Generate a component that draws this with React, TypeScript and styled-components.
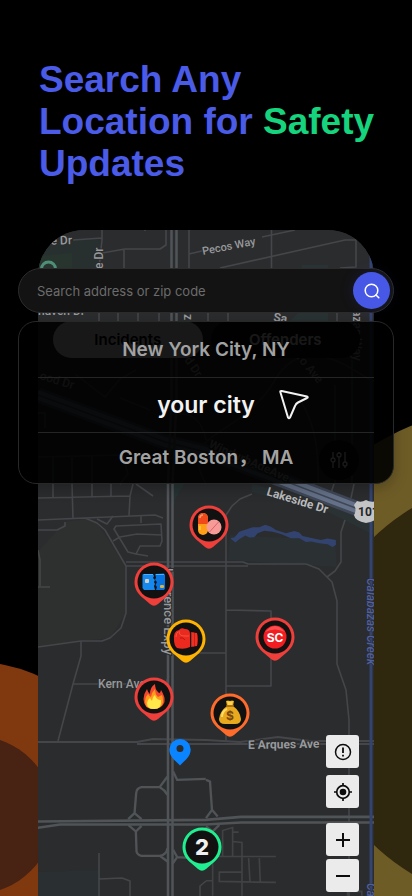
import React from 'react';
import styled, { createGlobalStyle } from 'styled-components';

const ui = 'Inter, "Noto Sans CJK SC", "Liberation Sans", sans-serif';

const GlobalStyle = createGlobalStyle`
  *, *::before, *::after { box-sizing: border-box; }
  html, body { margin: 0; background: #000; }
  button, input { font-family: ${ui}; }
`;

const Page = styled.main`
  position: relative;
  min-height: 100vh;
  overflow: hidden;
  background: #000;
  font-family: ${ui};
`;

const Disc = styled.div<{ $size: number; $x: number; $y: number; $side: 'left' | 'right'; $color: string }>`
  position: absolute;
  width: ${(p) => p.$size}px;
  height: ${(p) => p.$size}px;
  top: ${(p) => p.$y}px;
  ${(p) => p.$side}: ${(p) => p.$x}px;
  border-radius: 50%;
  background: ${(p) => p.$color};
`;

const Heading = styled.h1`
  position: relative;
  margin: 0;
  padding: 59px 0 45px 39px;
  color: #4a5be8;
  font: 700 37px/42px "Liberation Sans", Arial, sans-serif;
  white-space: nowrap;
`;

const Accent = styled.span`
  color: #16d47e;
`;

const Stage = styled.section`
  position: relative;
  display: grid;
`;

const Phone = styled.div`
  grid-area: 1 / 1;
  display: grid;
  margin: 0 38px;
  border-radius: 46px 46px 0 0;
  overflow: hidden;
  background: #2b2c2e;
`;

const MapCanvas = styled.div`
  grid-area: 1 / 1;
  position: relative;
  align-self: start;
  aspect-ratio: 336 / 666;
  & > svg { display: block; width: 100%; height: 100%; }
`;

const PinButton = styled.button<{ $x: number; $y: number }>`
  position: absolute;
  left: ${(p) => ((p.$x - 38) / 336) * 100}%;
  top: ${(p) => ((p.$y - 230) / 666) * 100}%;
  padding: 0;
  border: 0;
  background: none;
  cursor: pointer;
  transform: translate(-50%, -20px);
  svg { display: block; }
`;

const MapControls = styled.div`
  grid-area: 1 / 1;
  position: relative;
  display: flex;
  flex-direction: column;
  align-items: flex-end;
  padding: 91px 14px 4px 15px;
  pointer-events: none;
  & > * { pointer-events: auto; }
`;

const Tabs = styled.div`
  align-self: stretch;
  display: grid;
  grid-template-columns: 1fr 1fr;
  gap: 8px;
`;

const Tab = styled.button<{ $active?: boolean }>`
  height: 37px;
  border: 0;
  border-radius: 19px;
  background: ${(p) => (p.$active ? '#f0f0f0' : '#0c0c0d')};
  color: ${(p) => (p.$active ? '#000' : '#f4f4f4')};
  font-size: 15px;
  font-weight: 600;
`;

const FilterButton = styled.button`
  display: grid;
  place-items: center;
  width: 40px;
  height: 40px;
  margin: 82px 1px auto 0;
  border: 0;
  border-radius: 50%;
  background: #0c0c0d;
  color: #fff;
`;

const ToolStack = styled.div`
  display: flex;
  flex-direction: column;
  gap: 7px;
  margin-right: 1px;
`;

const Tool = styled.button<{ $spaced?: boolean }>`
  display: grid;
  place-items: center;
  width: 33px;
  height: 33px;
  margin-top: ${(p) => (p.$spaced ? 8 : 0)}px;
  padding: 0;
  border: 0;
  border-radius: 3px;
  background: #ebebeb;
  color: #0c0c0c;
`;

const ZoomPair = styled.div`
  display: grid;
  gap: 3px;
`;

const Overlay = styled.div`
  grid-area: 1 / 1;
  position: relative;
  align-self: start;
  display: grid;
  gap: 8px;
  margin: 38px 18px 0;
`;

const SearchBar = styled.form`
  display: flex;
  align-items: center;
  height: 45px;
  padding: 0 3px 0 18px;
  border: 1px solid #2c2c2d;
  border-radius: 23px;
  background: #131313;
`;

const SearchInput = styled.input`
  flex: 1;
  min-width: 0;
  padding: 0;
  border: 0;
  outline: 0;
  background: transparent;
  color: #ddd;
  font-size: 13px;
  &::placeholder { color: #6c6c6c; opacity: 1; }
`;

const SearchButton = styled.button`
  display: grid;
  place-items: center;
  width: 37px;
  height: 37px;
  padding: 0;
  border: 0;
  border-radius: 50%;
  background: #4758e6;
  color: #fff;
  box-shadow: 0 0 16px rgba(71, 88, 230, 0.12);
`;

const Suggestions = styled.ul`
  margin: 0;
  padding: 0 19px;
  list-style: none;
  border: 1px solid #272828;
  border-radius: 18px;
  background: rgba(0, 0, 0, 0.9);
  box-shadow: 0 4px 14px rgba(0, 0, 0, 0.25);
`;

const Suggestion = styled.li`
  & + & { border-top: 1px solid #242525; }
`;

const City = styled.button<{ $height: number; $active?: boolean }>`
  display: grid;
  grid-template-columns: 1fr auto 1fr;
  align-items: center;
  width: 100%;
  height: ${(p) => p.$height}px;
  padding: 0;
  border: 0;
  background: none;
  color: ${(p) => (p.$active ? '#f2f2f2' : '#a2a2a2')};
  font-size: ${(p) => (p.$active ? 23 : 19)}px;
  font-weight: 600;
  line-height: 24px;
  white-space: pre;
  & > span { grid-column: 2; }
  & > svg { grid-column: 3; margin-left: 23px; }
`;

function RoadMap() {
  return (
    <svg viewBox="38 230 336 666" preserveAspectRatio="xMidYMin slice" role="img" aria-label="Street map">
      <rect x="38" y="230" width="336" height="666" fill="#2b2c2e" />
      <path d="M53 241L100 240V268H38V256Z" fill="#28302f" />
      <path d="M40 256L72 253V268H38Z" fill="#27352e" />
      <path d="M302 265H328V321H290L302 309Z" fill="#293334" />
      <path d="M85 519L97 523L126 566V613L110 638L81 641L38 647V552L65 522Z" fill="#2e302f" />
      <path d="M172 484H184L175 500L172 515Z" fill="#263332" />
      <path d="M252 484L374 515V535L326 511L252 492Z" fill="#2a3233" />
      <path d="M230 535L335 540L337 567L228 560Z" fill="#2b3032" />
      <path d="M38 872L100 870V896H38Z" fill="#2a2f31" />

      <g fill="none" stroke="#444649" strokeWidth="1.6" strokeLinejoin="round">
        <path d="M102 230V240L99 268V321M73 240L102 238M102 253L125 249H160L166 245V230M124 249V268M145 230V231M189 230V268M189 254L206 250M118 300V321M138 300V321M159 300V321" />
        <path d="M262 237L295 230M271.500 230V268M220 268L345 240H356M356 234V267L340 268M208 313V321M228 313V321M337 313V321" />
        <path d="M38 498L130 496L133 484M53 484V497M72 484L73 519M92 484V497M111 484V496M130 496L129 516M136 484L153 496" />
        <path d="M38 520L155 515L163 518M141 516V523M38 530H57L65 526V522M85 518L97 523L105 530L126 566V613L121 628L110 638L102 641H81L38 647" />
        <path d="M116 526L161 524L162 541L160 546H140L136 554L128 552L114 529ZM113 541L120 537L137 534L162 535M136 554L148 556M97 519L107 524L113 516M38 550L40 560V586M38 587H50" />
        <path d="M126 562H243L248 564H306L319 569L332 582L337 601V664L346 690L349 720V896M126 566H248" />
        <path d="M226 742V515L232 506L240 499L252 494M226 610L271 611V686H226M226 653H172M345 520L341 532V562L335 571L327 577" />
        <path d="M314 484L312 491M334 484L331 493M354 484L351 498" />
        <path d="M81 641V656L73 684L58 741M73 684H165L169 676" />
        <path d="M38 742H137L153 739L206 740L240 742L278 737L310 741H374M137 744H374" strokeWidth="1.8" />
        <path d="M99 853V896M99 879L122 878L130 881V896M200 896V886L206 881" />
      </g>

      <g transform="translate(206 660) scale(0.333)" fill="none" stroke="#404244" strokeWidth="5">
        <path d="M50 590V512L80 503V590M80 517H98M80 545L108 548V708M0 590H210M128 595L132 665M160 595L163 668M210 668L40 665V637H108M20 590V708M0 663H20M425 708V695H468V708" />
        <path d="M0 360L12 365L18 450L0 475M18 450L35 470M0 500L20 515L40 495" stroke="#505457" strokeWidth="7" />
      </g>

      <g transform="translate(0 660) scale(0.333)" fill="none" stroke="#505457" strokeWidth="8">
        <path d="M113 485L618 480L724 471H1124M113 504L180 494H618L724 488H1124" />
        <path
          d="M503 350L480 381L425 382Q410 385 409 400L404 460L385 478M404 460L425 478M480 382Q495 390 503 405M520 335L532 360L618 357M385 495L408 515L410 575Q412 585 425 588H480Q500 585 503 565M425 498L408 515M480 588L503 605M520 570L532 592L580 595M532 592L518 612"
          strokeWidth="7"
        />
      </g>

      <path d="M38 457L123 455L128 474L120 484M53 456V484M72 456V484M92 456V484M38 413H45V428M75 374L105 397L120 379L136 370M120 398L150 410M206 484C175 430 240 440 275 380S374 390 374 380M300 400Q320 430 318 484M170 415Q200 408 206 440M335 385V484M352 321V484" fill="none" stroke="#4c4e51" strokeWidth="1.500" />
      <path d="M38 395L165 442L206 452L282 480L374 515" fill="none" stroke="#3f4757" strokeWidth="15" />
      <path d="M38 392L165 439L206 449L282 477L374 512M38 398L165 445L206 455L282 483L374 518" fill="none" stroke="#647087" strokeWidth="4" />

      <path d="M171.500 230V400L168 484V896M176.500 230V400L172.500 484V896" fill="none" stroke="#505458" strokeWidth="2.500" />
      <path d="M371 240V896" stroke="#35436f" strokeWidth="3" />

      <path
        transform="translate(206 490) scale(0.333)"
        fill="#33436f"
        d="M73 145L85 143L100 125L115 120L140 112L160 112L178 104L195 110L210 120L240 130L265 123L280 128L290 138L320 145L345 150L365 146L390 150V165L380 171L365 163L340 160L315 155L300 156L280 145L255 145L225 132L200 125L175 122L155 130L145 142L130 143L118 137L100 148L88 158Z"
      />

      <circle cx="48.500" cy="269" r="7" fill="none" stroke="#4f8f79" strokeWidth="3" />

      <g fill="#97999b" stroke="#2b2c2e" strokeWidth="2" paintOrder="stroke" fontFamily="Roboto, sans-serif" fontSize="12" fontWeight="500">
        <text x="44" y="245" transform="rotate(-2 44 245)">ne Dr</text>
        <text transform="translate(103 269) rotate(-90)">e Dr</text>
        <text transform="translate(203 255) rotate(-11)" fontSize="11">Pecos Way</text>
        <text x="38" y="315">naven Dr</text>
        <text transform="translate(184 314) rotate(90)">z Ave</text>
        <text transform="translate(273 321) rotate(8)" fontWeight="700">Sa</text>
        <text transform="translate(353 310) rotate(90)">azas Way</text>
        <text transform="translate(39 379) rotate(17)">ood Dr</text>
        <text transform="translate(184 360) rotate(55)">d Dr</text>
        <text transform="translate(296 358) rotate(50)">ro Ave</text>
        <text transform="translate(208 447) rotate(24)" fontWeight="700">WindurbAdeAve</text>
        <text x="98" y="688">Kern Ave</text>
        <text transform="translate(164 568) rotate(90)" fontSize="13">Lawrence Expy</text>
        <text x="248" y="749" transform="rotate(-1 248 749)" fontWeight="700">E Arques Ave</text>
        <text transform="translate(266 495) rotate(17)" fill="#b9bbbd" fontWeight="700">Lakeside Dr</text>
      </g>

      <g fill="#4f60a0" stroke="#2b2c2e" strokeWidth="1" paintOrder="stroke" fontFamily="Roboto, sans-serif" fontSize="12" fontStyle="italic" fontWeight="500">
        <text transform="translate(367 578) rotate(90)">Calabazas Creek</text>
        <text transform="translate(367 883) rotate(90)">Calabazas Creek</text>
      </g>

      <path d="M357 501Q361 503 366 500Q371 503 376 501L379 505Q377 510 379 515Q377 521 366 523Q355 521 354 515Q357 510 354 505Z" fill="#c3c4c6" />
      <text x="358" y="516" fill="#242628" fontFamily="Roboto, sans-serif" fontSize="12" fontWeight="700">101</text>
    </svg>
  );
}

type PinKind = 'pills' | 'card' | 'glove' | 'sc' | 'fire' | 'money' | 'count';

const pins: { kind: PinKind; label: string; x: number; y: number; color: string }[] = [
  { kind: 'pills', label: 'Drug incident', x: 209, y: 525, color: '#ee3f3b' },
  { kind: 'card', label: 'Fraud incident', x: 154, y: 582, color: '#ee3f3b' },
  { kind: 'glove', label: 'Assault incident', x: 186, y: 639, color: '#ffb300' },
  { kind: 'sc', label: 'SC incident', x: 275, y: 637, color: '#ee3f3b' },
  { kind: 'fire', label: 'Fire incident', x: 154, y: 697, color: '#ee3f3b' },
  { kind: 'money', label: 'Robbery incident', x: 230, y: 713, color: '#ff6b2b' },
  { kind: 'count', label: '2 incidents', x: 202, y: 847, color: '#20ef91' },
];

function PinArt({ kind }: { kind: PinKind }) {
  switch (kind) {
    case 'pills':
      return (
        <g>
          <rect x="9" y="8" width="10" height="22" rx="5" fill="#ff9d17" />
          <path d="M9 19V13a5 5 0 0 1 10 0v6Z" fill="#f04a1c" />
          <path d="M11 13q0-3 3-3" fill="none" stroke="#ff9a72" strokeWidth="1.500" />
          <path d="M11 21v4" stroke="#ffce4a" strokeWidth="1.500" />
          <circle cx="25" cy="22" r="7.500" fill="#f79b98" />
          <path d="M20.500 27L29.500 17" stroke="#d86568" strokeWidth="1" />
        </g>
      );
    case 'card':
      return (
        <g>
          <path d="M9 12H19L20 14L19 16L21 18L20 20L21 22L20 24L21 28H10L8.500 26V13Z" fill="#1789ee" />
          <path d="M21 12L30 11.500L31 13V26.500L30 28H22L23 25L21.500 23L23 20L21 18L22 15.500Z" fill="#0872df" />
          <path d="M10 12.500H19M22 12.500H30" stroke="#45b2ff" strokeWidth="1" />
          <rect x="11" y="17" width="4" height="4" rx="1" fill="#d4d0bd" />
          <rect x="26" y="23" width="4" height="3" rx="1" fill="#d7b34a" />
        </g>
      );
    case 'glove':
      return (
        <g>
          <path d="M8 21Q7 12 13 11Q15 8 19 10Q24 10 24 15V28Q18 31 11 29Q8 26 8 21Z" fill="#ea2a1e" />
          <path d="M25 13L31 14Q33 20 31 27L25 28Z" fill="#d41c13" />
          <path d="M27 13.500V27.500M30 14V27" stroke="#ff4b38" strokeWidth="1" />
          <path d="M13 12Q13 17 18 17H23M10 18Q10 14 12 13" fill="none" stroke="#f8533f" strokeWidth="1" />
          <path d="M14 19Q17 18 19 21" fill="none" stroke="#b81410" strokeWidth="1" />
        </g>
      );
    case 'sc':
      return (
        <g>
          <circle cx="20" cy="20" r="11.500" fill="#f21d20" />
          <path d="M10 15Q20 3 30 15Q20 10 10 15Z" fill="#fa5150" />
          <text x="20" y="25" textAnchor="middle" fill="#fff" fontFamily="Inter, sans-serif" fontSize="12" fontWeight="700">SC</text>
        </g>
      );
    case 'fire':
      return (
        <g>
          <path d="M20 32Q9.500 32 9.500 22Q9.500 17 13 12Q14 16 16 17Q16 10 21 7Q21 12 24 15Q26 18 27 13Q31.500 20 30.500 25Q28 32 20 32Z" fill="#f4472f" />
          <path d="M20 32Q11 32 11 24Q11 20 14 17Q16 20 17 20Q18 15 21 12Q21 17 24 20L28 18Q30 24 28 28Q25 32 20 32Z" fill="#ff9c1c" />
          <path d="M20 32Q13 32 13 26Q13 23 16 21L18 24Q19 19 21 18Q22 23 27 23Q28 32 20 32Z" fill="#ffe84a" />
        </g>
      );
    case 'money':
      return (
        <g>
          <path d="M16 8Q18 7 20 8Q22 7 24 8L23 13Q30 18 31 26Q31 31 25 31H15Q9 31 9 26Q10 18 17 13Z" fill="#e9a91e" />
          <path d="M17 8Q20 9 23 8L22 12H18Z" fill="#ffd34b" />
          <path d="M16 13H24" stroke="#9a6117" strokeWidth="1.500" />
          <path d="M12 24Q12 18 17 16" fill="none" stroke="#ffdc64" strokeWidth="2" />
          <text x="20" y="27" textAnchor="middle" fill="#79470f" fontFamily="Inter, sans-serif" fontSize="12" fontWeight="700">$</text>
        </g>
      );
    default:
      return (
        <text x="20" y="28" textAnchor="middle" fill="#f0f0f0" fontFamily="Inter, sans-serif" fontSize="22" fontWeight="800">2</text>
      );
  }
}

function Pin({ kind, label, x, y, color }: (typeof pins)[number]) {
  return (
    <PinButton $x={x} $y={y} aria-label={label}>
      <svg width="40" height="44" viewBox="0 0 40 44">
        <path d="M20 .5A19.500 19.500 0 0 0 .5 20C.5 27 4 32 9 36L16 42Q20 45.500 24 42L31 36C36 32 39.500 27 39.500 20A19.500 19.500 0 0 0 20 .5Z" fill={color} />
        <circle cx="20" cy="20" r="16.500" fill="#111" />
        <PinArt kind={kind} />
      </svg>
    </PinButton>
  );
}

export default function App() {
  return (
    <>
      <GlobalStyle />
      <Page>
        <Disc $size={306} $x={-178} $y={662} $side="left" $color="#80390e" />
        <Disc $size={158} $x={-104} $y={736} $side="left" $color="#482213" />
        <Disc $size={574} $x={-396} $y={404} $side="right" $color="#6e5c27" />
        <Disc $size={426} $x={-322} $y={478} $side="right" $color="#30270f" />

        <Heading>
          Search Any
          <br />
          Location for <Accent>Safety</Accent>
          <br />
          Updates
        </Heading>

        <Stage>
          <Phone>
            <MapCanvas>
              <RoadMap />
              {pins.map((pin) => (
                <Pin key={pin.kind} {...pin} />
              ))}
              <PinButton $x={180} $y={759} aria-label="Selected location">
                <svg width="22" height="27" viewBox="0 0 22 27">
                  <path fillRule="evenodd" d="M11 0A10.700 10.700 0 0 0 .3 10.500C.3 18 7 22 11 26.500C15 22 21.700 18 21.700 10.500A10.700 10.700 0 0 0 11 0ZM11 6A3.500 3.500 0 1 1 11 13A3.500 3.500 0 0 1 11 6Z" fill="#0a84ff" />
                </svg>
              </PinButton>
            </MapCanvas>

            <MapControls>
              <Tabs>
                <Tab $active>Incidents</Tab>
                <Tab>Offenders</Tab>
              </Tabs>
              <FilterButton aria-label="Filters">
                <svg width="18" height="18" viewBox="0 0 18 18" fill="none" stroke="currentColor" strokeWidth="1.300">
                  <path d="M3 1V7M3 11V17M9 1V2M9 6V17M15 1V11M15 15V17" />
                  <circle cx="3" cy="9" r="2" />
                  <circle cx="9" cy="4" r="2" />
                  <circle cx="15" cy="13" r="2" />
                </svg>
              </FilterButton>
              <ToolStack>
                <Tool aria-label="Report">
                  <svg width="18" height="18" viewBox="0 0 18 18" fill="none" stroke="currentColor" strokeWidth="1.500">
                    <circle cx="9" cy="9" r="7.500" />
                    <path d="M9 4.500V10M9 11.800V13.600" strokeWidth="1.800" />
                  </svg>
                </Tool>
                <Tool aria-label="My location">
                  <svg width="18" height="18" viewBox="0 0 18 18" fill="none" stroke="currentColor" strokeWidth="1.700">
                    <circle cx="9" cy="9" r="6.300" />
                    <circle cx="9" cy="9" r="3.300" fill="currentColor" stroke="none" />
                    <path d="M9 0V3M9 15V18M0 9H3M15 9H18" />
                  </svg>
                </Tool>
                <ZoomPair>
                  <Tool $spaced aria-label="Zoom in">
                    <svg width="16" height="16" viewBox="0 0 16 16" stroke="currentColor" strokeWidth="2">
                      <path d="M8 1V15M1 8H15" />
                    </svg>
                  </Tool>
                  <Tool aria-label="Zoom out">
                    <svg width="16" height="16" viewBox="0 0 16 16" stroke="currentColor" strokeWidth="2">
                      <path d="M1 8H15" />
                    </svg>
                  </Tool>
                </ZoomPair>
              </ToolStack>
            </MapControls>
          </Phone>

          <Overlay>
            <SearchBar onSubmit={(e) => e.preventDefault()}>
              <SearchInput type="text" aria-label="Search address or zip code" placeholder="Search address or zip code" />
              <SearchButton aria-label="Search">
                <svg width="16" height="16" viewBox="0 0 16 16" fill="none" stroke="currentColor" strokeWidth="1.500" strokeLinecap="round">
                  <circle cx="7.500" cy="7.500" r="6.300" />
                  <path d="M12 12L14.800 14.800" />
                </svg>
              </SearchButton>
            </SearchBar>

            <Suggestions>
              <Suggestion>
                <City $height={55}><span>New York City, NY</span></City>
              </Suggestion>
              <Suggestion>
                <City $height={54} $active>
                  <span>your city</span>
                  <svg width="32" height="32" viewBox="0 0 32 32" fill="none" stroke="currentColor" strokeWidth="2" strokeLinejoin="round">
                    <path d="M2.500 3.500Q1.700 1.700 3.700 2L29 7.500Q30.500 8 29 9L20 13.500Q18 14.500 17 17L12 28.500Q11 30 10 28.500Z" />
                  </svg>
                </City>
              </Suggestion>
              <Suggestion>
                <City $height={50}><span>Great Boston， MA</span></City>
              </Suggestion>
            </Suggestions>
          </Overlay>
        </Stage>
      </Page>
    </>
  );
}
